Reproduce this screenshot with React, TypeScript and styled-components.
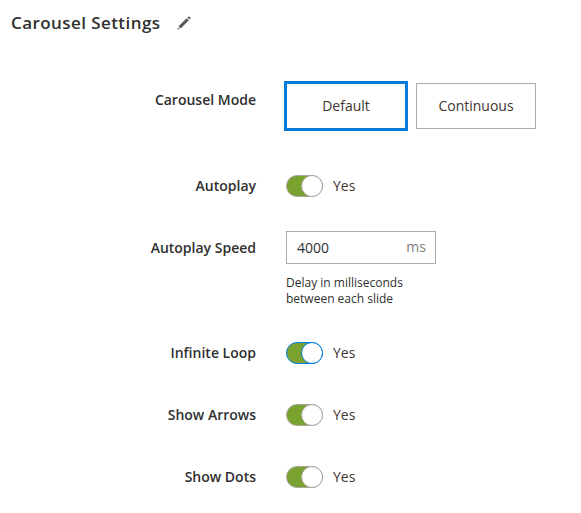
import React from "react";
import styled, { createGlobalStyle } from "styled-components";

const Global = createGlobalStyle`
  *{box-sizing:border-box}
  body{margin:0;background:#fff;color:#303030;font-family:"Open Sans",sans-serif;font-size:14px}
`;
const Page = styled.main`width:581px;height:513px;overflow:hidden;`;
const Header = styled.header`display:flex;align-items:center;height:46px;padding-left:11px;gap:17px;`;
const Title = styled.h1`margin:0;font-size:17px;font-weight:600;line-height:24px;letter-spacing:.025em;`;
const Pencil = styled.svg`width:14px;height:14px;display:block;`;
const Row = styled.div<{ $h: number; $gap: number }>`
  display:grid;grid-template-columns:256px 1fr;column-gap:30px;height:${p => p.$h}px;margin-top:${p => p.$gap}px;
`;
const Label = styled.label<{ $top?: number }>`text-align:right;font-weight:600;line-height:20px;padding-top:${p => p.$top ?? 1}px;`;
const Modes = styled.div`display:flex;gap:8px;margin-left:-2px;align-items:center;`;
const Mode = styled.button<{ $active?: boolean }>`
  width:${p => p.$active ? 124 : 120}px;height:${p => p.$active ? 50 : 46}px;padding:0 0 2px;background:#fff;
  border:${p => p.$active ? "3px solid #007bdb" : "1px solid #adadad"};font:inherit;color:#41362f;
`;
const SwitchLine = styled.div`display:flex;align-items:center;gap:10px;height:22px;`;
const State = styled.span`line-height:20px;color:#41362f;`;
const Track = styled.span<{ $focus?: boolean }>`
  width:37px;height:22px;border-radius:11px;background:#79a22e;border:1px solid ${p => p.$focus ? "#007bdb" : "#aaa6a0"};display:flex;justify-content:flex-end;
`;
const Knob = styled.span<{ $focus?: boolean }>`
  width:22px;height:22px;margin:-1px;border-radius:50%;background:#fff;border:1px solid ${p => p.$focus ? "#007bdb" : "#aaa6a0"};
`;
const Field = styled.div`display:flex;align-items:center;justify-content:space-between;width:150px;height:33px;border:1px solid #adadad;padding:0 9px 0 10px;`;
const Unit = styled.span`color:#808080;line-height:19px;padding-bottom:2px;`;
const Note = styled.p`margin:11px 0 0;font-size:12px;line-height:16px;`;

function Toggle({ label, gap, focus }: { label: string; gap: number; focus?: boolean }) {
  return <Row $h={22} $gap={gap}><Label>{label}</Label><SwitchLine><Track $focus={focus}><Knob $focus={focus} /></Track><State>Yes</State></SwitchLine></Row>;
}

export default function App() {
  return <Page><Global />
    <Header><Title>Carousel Settings</Title>
      <Pencil viewBox="0 0 14 14" fill="#5a5552"><path d="M.4 13.6l.7-2.2 1.5 1.5zM1.6 10.3l8.1-8.1 2.1 2.1-8.1 8.1zM10.4 1.5l.8-.8q.6-.5 1.2 0l.9.9q.5.6 0 1.2l-.8.8z" /></Pencil>
    </Header>
    <Row $h={50} $gap={35}><Label $top={9}>Carousel Mode</Label><Modes><Mode $active>Default</Mode><Mode>Continuous</Mode></Modes></Row>
    <Toggle label="Autoplay" gap={44} />
    <Row $h={76} $gap={34}><Label $top={7}>Autoplay Speed</Label><div><Field><span>4000</span><Unit>ms</Unit></Field><Note>Delay in milliseconds<br />between each slide</Note></div></Row>
    <Toggle label="Infinite Loop" gap={35} focus />
    <Toggle label="Show Arrows" gap={40} />
    <Toggle label="Show Dots" gap={40} />
  </Page>;
}
